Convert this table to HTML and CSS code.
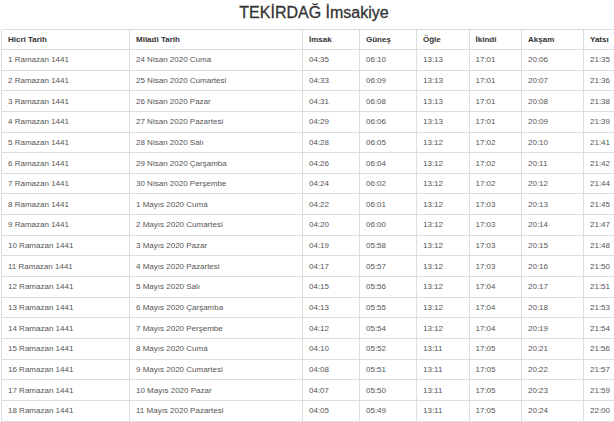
FILE: index.html
```html
<!DOCTYPE html>
<html lang="tr">
<head>
<meta charset="utf-8">
<title>TEKİRDAĞ İmsakiye</title>
<link rel="stylesheet" href="styles.css">
</head>
<body>
<div class="page">
  <h1 class="title">TEKİRDAĞ İmsakiye</h1>
  <table class="imsakiye">
    <colgroup>
      <col class="c-hicri"><col class="c-miladi"><col class="c-t"><col class="c-t"><col class="c-t2"><col class="c-t2"><col class="c-t3"><col class="c-t4">
    </colgroup>
    <thead>
      <tr><th>Hicri Tarih</th><th>Miladi Tarih</th><th>İmsak</th><th>Güneş</th><th>Öğle</th><th>İkindi</th><th>Akşam</th><th>Yatsı</th></tr>
    </thead>
    <tbody>
      <tr><td>1 Ramazan 1441</td><td>24 Nisan 2020 Cuma</td><td>04:35</td><td>06:10</td><td>13:13</td><td>17:01</td><td>20:06</td><td>21:35</td></tr>
      <tr><td>2 Ramazan 1441</td><td>25 Nisan 2020 Cumartesi</td><td>04:33</td><td>06:09</td><td>13:13</td><td>17:01</td><td>20:07</td><td>21:36</td></tr>
      <tr><td>3 Ramazan 1441</td><td>26 Nisan 2020 Pazar</td><td>04:31</td><td>06:08</td><td>13:13</td><td>17:01</td><td>20:08</td><td>21:38</td></tr>
      <tr><td>4 Ramazan 1441</td><td>27 Nisan 2020 Pazartesi</td><td>04:29</td><td>06:06</td><td>13:13</td><td>17:01</td><td>20:09</td><td>21:39</td></tr>
      <tr><td>5 Ramazan 1441</td><td>28 Nisan 2020 Salı</td><td>04:28</td><td>06:05</td><td>13:12</td><td>17:02</td><td>20:10</td><td>21:41</td></tr>
      <tr><td>6 Ramazan 1441</td><td>29 Nisan 2020 Çarşamba</td><td>04:26</td><td>06:04</td><td>13:12</td><td>17:02</td><td>20:11</td><td>21:42</td></tr>
      <tr><td>7 Ramazan 1441</td><td>30 Nisan 2020 Perşembe</td><td>04:24</td><td>06:02</td><td>13:12</td><td>17:02</td><td>20:12</td><td>21:44</td></tr>
      <tr><td>8 Ramazan 1441</td><td>1 Mayıs 2020 Cuma</td><td>04:22</td><td>06:01</td><td>13:12</td><td>17:03</td><td>20:13</td><td>21:45</td></tr>
      <tr><td>9 Ramazan 1441</td><td>2 Mayıs 2020 Cumartesi</td><td>04:20</td><td>06:00</td><td>13:12</td><td>17:03</td><td>20:14</td><td>21:47</td></tr>
      <tr><td>10 Ramazan 1441</td><td>3 Mayıs 2020 Pazar</td><td>04:19</td><td>05:58</td><td>13:12</td><td>17:03</td><td>20:15</td><td>21:48</td></tr>
      <tr><td>11 Ramazan 1441</td><td>4 Mayıs 2020 Pazartesi</td><td>04:17</td><td>05:57</td><td>13:12</td><td>17:03</td><td>20:16</td><td>21:50</td></tr>
      <tr><td>12 Ramazan 1441</td><td>5 Mayıs 2020 Salı</td><td>04:15</td><td>05:56</td><td>13:12</td><td>17:04</td><td>20:17</td><td>21:51</td></tr>
      <tr><td>13 Ramazan 1441</td><td>6 Mayıs 2020 Çarşamba</td><td>04:13</td><td>05:55</td><td>13:12</td><td>17:04</td><td>20:18</td><td>21:53</td></tr>
      <tr><td>14 Ramazan 1441</td><td>7 Mayıs 2020 Perşembe</td><td>04:12</td><td>05:54</td><td>13:12</td><td>17:04</td><td>20:19</td><td>21:54</td></tr>
      <tr><td>15 Ramazan 1441</td><td>8 Mayıs 2020 Cuma</td><td>04:10</td><td>05:52</td><td>13:11</td><td>17:05</td><td>20:21</td><td>21:56</td></tr>
      <tr><td>16 Ramazan 1441</td><td>9 Mayıs 2020 Cumartesi</td><td>04:08</td><td>05:51</td><td>13:11</td><td>17:05</td><td>20:22</td><td>21:57</td></tr>
      <tr><td>17 Ramazan 1441</td><td>10 Mayıs 2020 Pazar</td><td>04:07</td><td>05:50</td><td>13:11</td><td>17:05</td><td>20:23</td><td>21:59</td></tr>
      <tr><td>18 Ramazan 1441</td><td>11 Mayıs 2020 Pazartesi</td><td>04:05</td><td>05:49</td><td>13:11</td><td>17:05</td><td>20:24</td><td>22:00</td></tr>
    </tbody>
  </table>
</div>
</body>
</html>
```
FILE: styles.css
```css
html, body {
  margin: 0;
  padding: 0;
  background: #fff;
  overflow: hidden;
}
.page {
  width: 626px;
  height: 422px;
  overflow: hidden;
  padding-left: 1px;
  font-family: "Liberation Sans", Arial, sans-serif;
  color: #555;
}
.title {
  margin: 0;
  height: 29px;
  line-height: 26px;
  font-size: 16px;
  font-weight: normal;
  color: #333;
  -webkit-text-stroke: 0.3px #333;
  text-align: center;
}
.imsakiye {
  border-collapse: collapse;
  table-layout: fixed;
  width: 625px;
  font-size: 8px;
}
.c-hicri { width: 128px; }
.c-miladi { width: 173px; }
.c-t { width: 57px; }
.c-t2 { width: 52.5px; }
.c-t3 { width: 62px; }
.c-t4 { width: 43px; }
.imsakiye th,
.imsakiye td {
  border: 1px solid #ddd;
  padding: 0 6px;
  height: 19.65px;
  text-align: left;
  vertical-align: middle;
  white-space: nowrap;
}
.imsakiye th {
  font-weight: bold;
  color: #333;
  height: 19px;
}
```
